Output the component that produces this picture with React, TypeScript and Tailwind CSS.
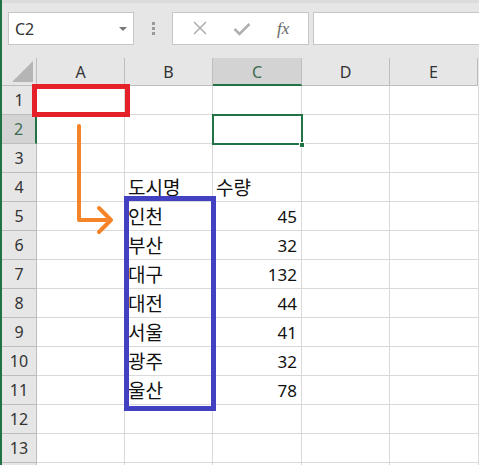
import React from "react";

const COLS = ["A", "B", "C", "D", "E"];

// row -> [B, C]
const CELLS: Record<number, [string, string]> = {
  4: ["도시명", "수량"],
  5: ["인천", "45"],
  6: ["부산", "32"],
  7: ["대구", "132"],
  8: ["대전", "44"],
  9: ["서울", "41"],
  10: ["광주", "32"],
  11: ["울산", "78"],
};

const font = { fontFamily: '"Noto Sans", "Noto Sans CJK KR", sans-serif' };

function Toolbar() {
  return (
    <div className="flex h-[58px] shrink-0 items-start gap-0 border-t-[3px] border-t-[#dcdcdc] bg-[#e6e6e6] pt-[9px] pl-[6px]">
      <div className="flex h-[33px] w-[126px] items-center justify-between border border-[#c6c6c6] bg-white pr-[6px] pl-[6px]">
        <span className="text-[16px] text-[#333]">C2</span>
        <span className="h-0 w-0 border-x-[4px] border-t-[4px] border-x-transparent border-t-[#777]" />
      </div>
      <div className="flex h-[33px] w-[38px] flex-col items-center justify-center gap-[2px]">
        <span className="size-[3px] bg-[#9a9a9a]" />
        <span className="size-[3px] bg-[#9a9a9a]" />
        <span className="size-[3px] bg-[#9a9a9a]" />
      </div>
      <div className="flex h-[33px] w-[137px] items-center justify-around border border-[#c6c6c6] bg-white px-[6px]">
        <svg width="16" height="16" viewBox="0 0 16 16" className="mb-[1px]">
          <path d="M2 2L14 14M14 2L2 14" stroke="#b0b0b0" strokeWidth="1.6" fill="none" />
        </svg>
        <svg width="18" height="14" viewBox="0 0 18 14">
          <path d="M1.5 7L6.5 12L16.5 2" stroke="#b0b0b0" strokeWidth="2.6" fill="none" />
        </svg>
        <span
          className="text-[17px] text-[#666] italic"
          style={{ fontFamily: '"Liberation Serif", "DejaVu Serif", serif' }}
        >
          fx
        </span>
      </div>
      <div className="ml-[4px] h-[33px] flex-1 border border-r-0 border-[#c6c6c6] bg-white" />
    </div>
  );
}

function HeaderRow() {
  return (
    <div className="flex h-[28px] shrink-0 bg-[#e6e6e6]">
      <div className="relative w-[35px] shrink-0 border-r border-b border-[#bdbdbd]">
        <span className="absolute right-[3px] bottom-[3px] h-0 w-0 border-b-[21px] border-l-[21px] border-b-[#b5b5b5] border-l-transparent" />
      </div>
      {COLS.map((c) =>
        c === "C" ? (
          <div
            key={c}
            className="flex w-[89px] shrink-0 items-center justify-center border-r border-b-2 border-r-[#bdbdbd] border-b-[#217346] bg-[#d3d3d3] pt-[2px] text-[16px] text-[#3d6b4f]"
          >
            {c}
          </div>
        ) : (
          <div
            key={c}
            className="flex w-[88px] shrink-0 items-center justify-center border-r border-b border-[#bdbdbd] text-[16px] text-[#333]"
          >
            {c}
          </div>
        ),
      )}
    </div>
  );
}

function Row({ n }: { n: number }) {
  const cells = CELLS[n];
  const active = n === 2;
  return (
    <div className="flex h-[29px] shrink-0">
      <div
        className={
          active
            ? "flex w-[35px] shrink-0 items-center justify-center border-r-2 border-b border-r-[#217346] border-b-[#bdbdbd] bg-[#d3d3d3] text-[16px] text-[#3d6b4f]"
            : "flex w-[35px] shrink-0 items-center justify-center border-r border-b border-[#bdbdbd] bg-[#e6e6e6] text-[16px] text-[#333]"
        }
      >
        {n <= 13 ? n : ""}
      </div>
      {COLS.map((c) => {
        let text = "";
        if (cells && c === "B") text = cells[0];
        if (cells && c === "C") text = cells[1];
        const right = c === "C" && n > 4;
        return (
          <div
            key={c}
            className={
              "flex shrink-0 items-center border-r border-b border-[#d9d9d9] bg-white pt-[2px] text-[#111] " +
              (c === "C" || c === "E" ? "w-[89px] " : "w-[88px] ") +
              (right ? "justify-end pr-[4px] text-[17px]" : "justify-start pl-[3px] text-[19px]")
            }
          >
            {text}
          </div>
        );
      })}
    </div>
  );
}

export default function App() {
  const rows = Array.from({ length: 14 }, (_, i) => i + 1);
  return (
    <div
      className="flex h-[465px] w-[479px] flex-col overflow-hidden border-l-2 border-[#217346] bg-white"
      style={font}
    >
      <Toolbar />
      <div className="relative flex flex-col">
        <HeaderRow />
        {rows.map((n) => (
          <Row key={n} n={n} />
        ))}

        {/* active cell C2 */}
        <div className="absolute top-[56px] left-[210px] h-[31px] w-[91px] border-2 border-[#217346]" />
        <div className="absolute top-[84px] left-[297px] size-[6px] border border-white bg-[#217346]" />

        {/* red box around A1 */}
        <div className="absolute top-[26px] left-[30px] h-[33px] w-[98px] border-[5px] border-[#e52028]" />

        {/* blue box around B5:B11 */}
        <div className="absolute top-[138px] left-[122px] h-[215px] w-[92px] border-[5px] border-[#4141c2]" />

        {/* orange arrow */}
        <svg
          className="absolute top-[66px] left-[68px]"
          width="48"
          height="120"
          viewBox="0 0 48 120"
        >
          <path
            d="M9 2V96H36"
            stroke="#f58327"
            strokeWidth="4"
            strokeLinecap="round"
            strokeLinejoin="round"
            fill="none"
          />
          <path
            d="M29 84L41 96L29 108"
            stroke="#f58327"
            strokeWidth="4"
            strokeLinecap="round"
            strokeLinejoin="round"
            fill="none"
          />
        </svg>
      </div>
    </div>
  );
}
